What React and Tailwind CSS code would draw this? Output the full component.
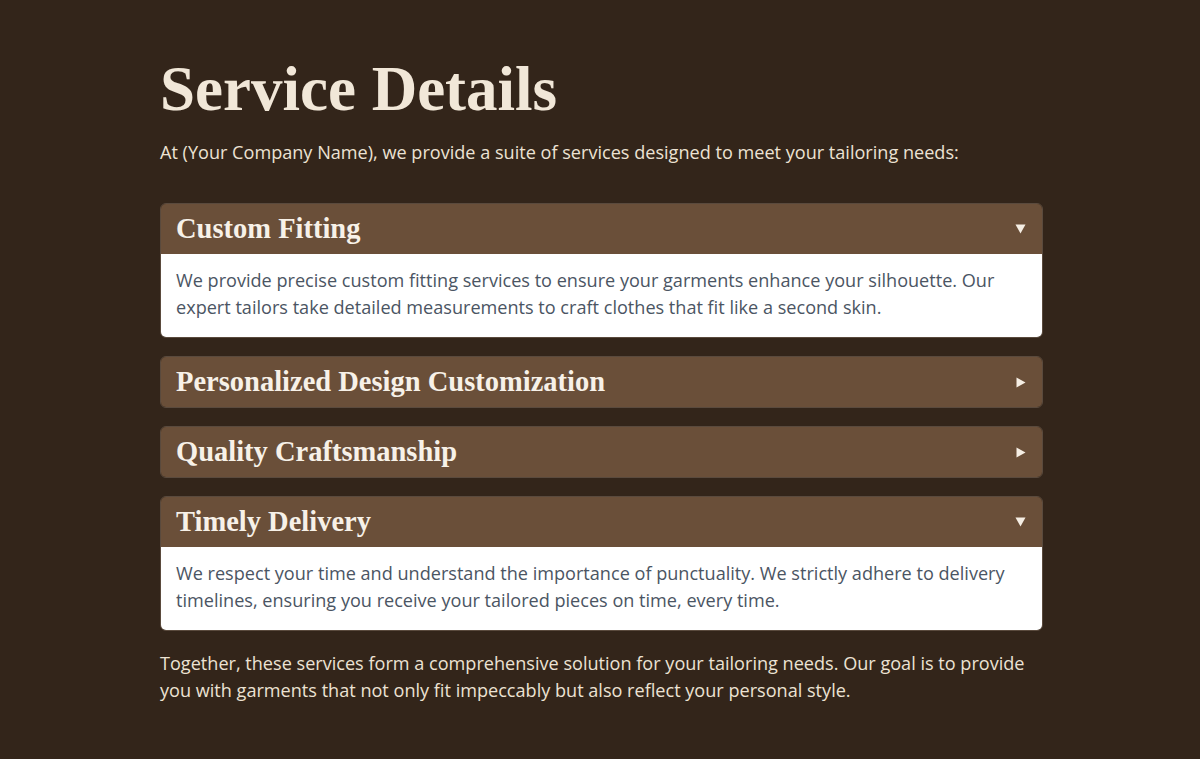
const services = [
  {
    title: "Custom Fitting",
    open: true,
    body: "We provide precise custom fitting services to ensure your garments enhance your silhouette. Our expert tailors take detailed measurements to craft clothes that fit like a second skin.",
  },
  { title: "Personalized Design Customization", open: false },
  { title: "Quality Craftsmanship", open: false },
  {
    title: "Timely Delivery",
    open: true,
    body: "We respect your time and understand the importance of punctuality. We strictly adhere to delivery timelines, ensuring you receive your tailored pieces on time, every time.",
  },
];

const serif = { fontFamily: '"Liberation Serif", "Times New Roman", serif' };

function Caret({ open }) {
  return open ? (
    <svg width="11" height="10" viewBox="0 0 11 10" className="block">
      <path d="M0.5 0.5 H10.5 L5.5 9.5 Z" fill="#f5eee4" />
    </svg>
  ) : (
    <svg width="10" height="11" viewBox="0 0 10 11" className="block">
      <path d="M0.5 0.5 V10.5 L9.5 5.5 Z" fill="#f5eee4" />
    </svg>
  );
}

function ServiceCard({ title, open, body }) {
  return (
    <div className="rounded-md border border-[#5a4a3d] overflow-hidden">
      <div className="flex items-center justify-between bg-[#6a4f39] h-[50px] pl-[15px] pr-[16px]">
        <h2 className="text-[28.5px] font-bold text-[#f7f1e8] leading-none" style={serif}>
          {title}
        </h2>
        <Caret open={open} />
      </div>
      {open && (
        <div className="bg-white px-[15px] pt-[13px] pb-[16px] text-[18.1px] leading-[27px] text-[#4b5563]">
          {body}
        </div>
      )}
    </div>
  );
}

export default function App() {
  return (
    <div
      className="min-h-screen bg-[#33251a] text-[#ece2d3]"
      style={{ fontFamily: '"Open Sans", "Noto Sans", sans-serif' }}
    >
      <div className="w-[886px] mx-auto pl-[3px] pt-[53px] pb-[40px]">
        <h1 className="text-[63px] font-bold leading-[72px] text-[#f1e7d8]" style={serif}>
          Service Details
        </h1>
        <p className="mt-[14px] text-[18.1px] leading-[27px]">
          At (Your Company Name), we provide a suite of services designed to meet your tailoring needs:
        </p>
        <div className="mt-[37px] flex flex-col gap-[18px]">
          {services.map((s) => (
            <ServiceCard key={s.title} {...s} />
          ))}
        </div>
        <p className="mt-[19px] text-[18.1px] leading-[27px]">
          Together, these services form a comprehensive solution for your tailoring needs. Our goal is to provide you with garments that not only fit impeccably but also reflect your personal style.
        </p>
      </div>
    </div>
  );
}
